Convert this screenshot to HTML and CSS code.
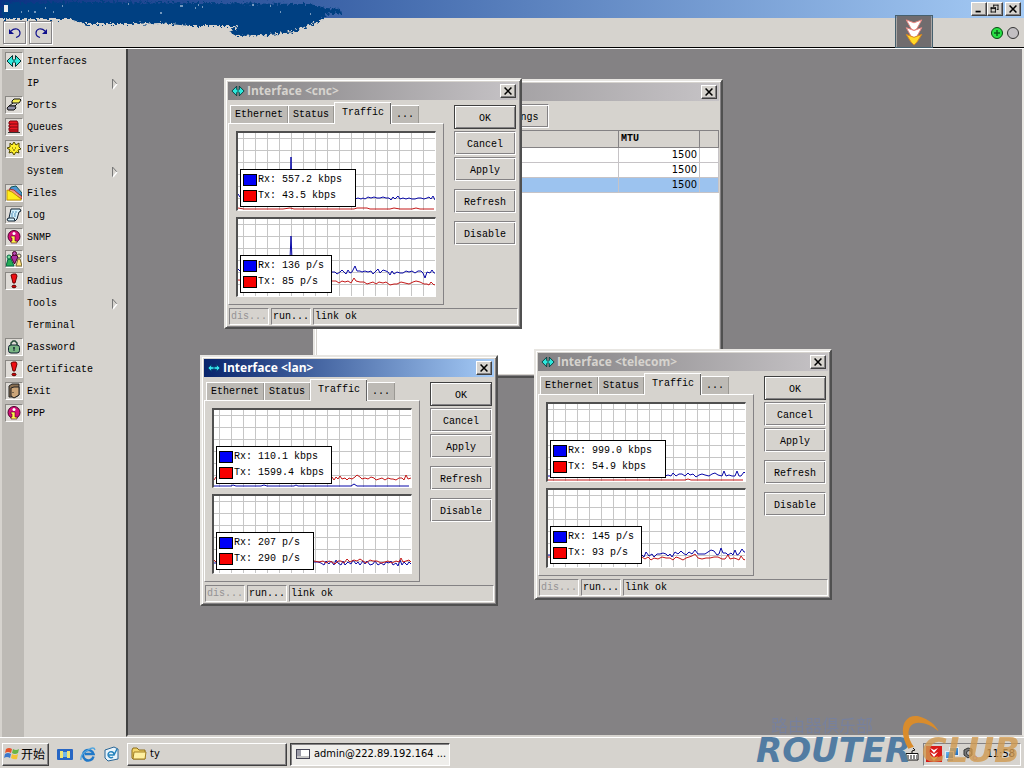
FILE: index.html
```html
<!DOCTYPE html>
<html lang="en">
<head>
<meta charset="utf-8">
<title>admin@222.89.192.164</title>
<link rel="stylesheet" href="styles.css">
</head>
<body>
<svg class="defs" aria-hidden="true">
  <defs>
    <pattern id="grid" width="12" height="12" patternUnits="userSpaceOnUse" x="5" y="5">
      <path d="M0.5 0V12M0 0.5H12" stroke="#c6c6c6" fill="none"/>
    </pattern>
    <linearGradient id="shell" x1="0" x2="1" y1="0" y2="1"><stop offset="0" stop-color="#6fc3f5"/><stop offset="1" stop-color="#1560b8"/></linearGradient>
    <filter id="rough" x="-5%" y="-20%" width="110%" height="140%">
      <feTurbulence type="fractalNoise" baseFrequency="0.4" numOctaves="2" seed="4"/>
      <feDisplacementMap in="SourceGraphic" scale="8"/>
    </filter>
    <symbol id="i-iface" viewBox="0 0 16 16"><path d="M1 8L6.500 2.500V13.500Z" fill="#2ee8dc" stroke="#033"/><path d="M15 8L9.500 2.500V13.500Z" fill="#2ee8dc" stroke="#033"/><path d="M5 8H11" stroke="#2ee8dc" stroke-width="3"/><path d="M8 6V10" stroke="#033"/></symbol>
    <symbol id="i-iface2" viewBox="0 0 16 16"><path d="M1 8L5 4V6.500H11V4L15 8L11 12V9.500H5V12Z" fill="#35e5ee" stroke="#06386b"/><path d="M8 6V10" stroke="#06386b"/></symbol>
    <symbol id="i-ports" viewBox="0 0 16 16"><path d="M6 4L8 2H14L15 3L13 6H6Z" fill="#f5ee54" stroke="#111"/><path d="M7 6L3 9H9L11 7" fill="none" stroke="#111"/><path d="M1 11L3 9H9L10 11L8 13H2Z" fill="#9292a8" stroke="#111"/></symbol>
    <symbol id="i-queues" viewBox="0 0 16 16"><path d="M4 2H11L12 4V13H4L3 11V9H4V8H3V6H4V5H3V3Z" fill="#ec1822" stroke="#7b0710"/><path d="M4 5H12M4 8H12M4 11H12" stroke="#7b0710"/><path d="M2 13.500H14" stroke="#333"/></symbol>
    <symbol id="i-drivers" viewBox="0 0 16 16"><path d="M4 2L6 4L8 1L10 4L13 2V6L15 8L12 9L13 12L10 11L8 14L6 11L3 12L4 9L1 7L4 6Z" fill="#fff02a" stroke="#534b00"/><path d="M6 7H7M9 7H10M7 9H9" stroke="#534b00"/></symbol>
    <symbol id="i-files" viewBox="0 0 16 16"><path d="M5 2L10 1L16 8V11L4 4Z" fill="#4d95d3" stroke="#155"/><path d="M3 4L8 5L16 12V14L4 7Z" fill="#ef9a85" stroke="#a33"/><path d="M1 5L6 7L15 14V15H1Z" fill="#ffee1c" stroke="#c69900"/></symbol>
    <symbol id="i-log" viewBox="0 0 16 16"><path d="M5 2H14L15 4L13 5L11 12L9 14H2L1 12L3 11Z" fill="#d5f1fb" stroke="#123"/><path d="M6 5H11M5 7H10M5 9H10" stroke="#5590b8" stroke-dasharray="2 1"/><path d="M3 11H8L9 14" fill="none" stroke="#123"/></symbol>
    <symbol id="i-info" viewBox="0 0 16 16"><circle cx="8" cy="7.500" r="6" fill="#d60e78" stroke="#4a0028"/><path d="M6 7H9V12H11V14H5V12H6V9H5V7Z" fill="#fff34a" stroke="#4a0028" stroke-width=".6"/><circle cx="8" cy="4.500" r="1.500" fill="#fff"/></symbol>
    <symbol id="i-users" viewBox="0 0 16 16"><path d="M0 15L2 8H5L8 15Z" fill="#25ad55" stroke="#064"/><circle cx="3" cy="6" r="2" fill="#7de0a0" stroke="#064"/><path d="M10 15L12 8H14L16 15Z" fill="#ffe27c" stroke="#763"/><circle cx="13" cy="5" r="2" fill="#ffe9a0" stroke="#555"/><path d="M5 6L7 4H10L12 6L8.500 13Z" fill="#a930a4" stroke="#402"/><circle cx="8.500" cy="2.500" r="2" fill="#b64ab1" stroke="#402"/></symbol>
    <symbol id="i-bang" viewBox="0 0 16 16"><path d="M5 2L7 1H10L11 3L9 10H7Z" fill="#ee0d12" stroke="#6d0000"/><ellipse cx="8" cy="13.500" rx="2" ry="1.300" fill="#d00" stroke="#500"/></symbol>
    <symbol id="i-lock" viewBox="0 0 16 16"><path d="M5 7V4L7 2H9L11 4V7" fill="none" stroke="#234a38" stroke-width="1.500"/><rect x="2.500" y="6" width="11" height="8" rx="2.500" fill="#79b583" stroke="#123"/><path d="M8 8V12M7 9H9" stroke="#123"/></symbol>
    <symbol id="i-exit" viewBox="0 0 16 16"><path d="M3 3L6 1H13V12L10 14H3Z" fill="#8b7052" stroke="#222"/><path d="M5 5L8 4H13V12L8 15L5 13Z" fill="#cba579" stroke="#222"/><path d="M7 9V10" stroke="#222"/></symbol>
    <symbol id="i-x" viewBox="0 0 16 14"><path d="M4 3L12 11M12 3L4 11" stroke="#000" stroke-width="1.800"/></symbol>
    <symbol id="i-arrow" viewBox="0 0 8 12"><path d="M1.500 11V1L6 6" stroke="#777" fill="none"/><path d="M6 6L2 11" fill="none" stroke="#fff" stroke-width="1.500"/></symbol>
    <symbol id="i-chev" viewBox="0 0 36 32"><rect width="36" height="32" fill="#706c6e"/><path d="M10 4L18 7L26 4L21 13L18 15L15 13Z" fill="#fff" stroke="#e98681"/><path d="M10 12L18 15L26 12L21 21L18 23L15 21Z" fill="#fff" stroke="#e98681"/><path d="M10 19L18 22L26 19L21 27L18 30L15 27Z" fill="#ffda28" stroke="#d98520"/></symbol>
  </defs>
</svg>

<header class="titlebar">
  <div class="caption-buttons">
    <button class="cap" type="button" aria-label="Minimize"><svg viewBox="0 0 16 14"><path d="M4 10H10" stroke="#000" stroke-width="2"/></svg></button>
    <button class="cap" type="button" aria-label="Restore"><svg viewBox="0 0 16 14"><path d="M6 2.500H12M6.500 2V5M11.500 2V8M10 7.500H12M3 5.500H9M3 6.500H9M3.500 5V11M8.500 5V11M3 10.500H9" stroke="#000" fill="none"/></svg></button>
    <button class="cap close" type="button" aria-label="Close"><svg><use href="#i-x"/></svg></button>
  </div>
  <svg class="smear" viewBox="0 0 350 42" aria-hidden="true">
    <path d="M2 3L90 2L200 3L310 4L326 8L340 9L341 13L326 15L318 22L304 27L294 32L270 35L236 36L228 31L240 26L220 26L190 26L160 23L130 24L85 24L70 19L2 19Z" fill="#054182" filter="url(#rough)"/>
    <path d="M21 12H22M28 11H29M34 12H36M45 8H46M53 12H54M62 6H63M128 4H129M160 13H162M180 6H183M195 8H196M198 5H199M202 7H203M252 5H254M270 6H271M280 12H281M310 14H311" stroke="#e8f0f8"/>
    <path d="M4 5H8V12H4Z" fill="#eee"/>
  </svg>
</header>

<div class="toolbar">
  <button class="tool" type="button" aria-label="Undo"><svg viewBox="0 0 16 16"><path d="M4 6C8 2 13 4 13 8C13 11 11 12 9 12.500" fill="none" stroke="#10108c" stroke-width="1.200"/><path d="M2 4V9H7Z" fill="#10108c"/></svg></button>
  <button class="tool" type="button" aria-label="Redo"><svg viewBox="0 0 16 16"><path d="M12 6C8 2 3 4 3 8C3 11 5 12 7 12.500" fill="none" stroke="#10108c" stroke-width="1.200"/><path d="M14 4V9H9Z" fill="#10108c"/></svg></button>
  <svg class="lights" viewBox="0 0 30 14" aria-hidden="true"><circle cx="7" cy="7" r="5.500" fill="#27e044" stroke="#064a10"/><path d="M4 7H10M7 4V10" stroke="#075c18" stroke-width="1.500"/><circle cx="23" cy="7" r="5.500" fill="#c2bfc2" stroke="#333"/></svg>
  <svg class="floater" aria-hidden="true"><use href="#i-chev"/></svg>
</div>

<div class="main">
  <nav class="menu">
    <button type="button"><span class="ico box"><svg><use href="#i-iface"/></svg></span>Interfaces</button>
    <button type="button"><span class="ico"></span>IP<svg class="arrow"><use href="#i-arrow"/></svg></button>
    <button type="button"><span class="ico box"><svg><use href="#i-ports"/></svg></span>Ports</button>
    <button type="button"><span class="ico box"><svg><use href="#i-queues"/></svg></span>Queues</button>
    <button type="button"><span class="ico box"><svg><use href="#i-drivers"/></svg></span>Drivers</button>
    <button type="button"><span class="ico"></span>System<svg class="arrow"><use href="#i-arrow"/></svg></button>
    <button type="button"><span class="ico box"><svg><use href="#i-files"/></svg></span>Files</button>
    <button type="button"><span class="ico box"><svg><use href="#i-log"/></svg></span>Log</button>
    <button type="button"><span class="ico box"><svg><use href="#i-info"/></svg></span>SNMP</button>
    <button type="button"><span class="ico box"><svg><use href="#i-users"/></svg></span>Users</button>
    <button type="button"><span class="ico box"><svg><use href="#i-bang"/></svg></span>Radius</button>
    <button type="button"><span class="ico"></span>Tools<svg class="arrow"><use href="#i-arrow"/></svg></button>
    <button type="button"><span class="ico"></span>Terminal</button>
    <button type="button"><span class="ico box"><svg><use href="#i-lock"/></svg></span>Password</button>
    <button type="button"><span class="ico box"><svg><use href="#i-bang"/></svg></span>Certificate</button>
    <button type="button"><span class="ico box"><svg><use href="#i-exit"/></svg></span>Exit</button>
    <button type="button"><span class="ico box"><svg><use href="#i-info"/></svg></span>PPP</button>
  </nav>

  <main class="desk">
    <section class="win list" aria-label="Interface list">
      <div class="bar"><button class="cap" type="button" aria-label="Close"><svg><use href="#i-x"/></svg></button></div>
      <div class="list-tools"><button class="btn settings" type="button">Settings</button></div>
      <div class="table-wrap">
        <table>
          <thead><tr><th class="wide"></th><th class="mtu">MTU</th><th></th></tr></thead>
          <tbody>
            <tr><td></td><td>1500</td><td></td></tr>
            <tr><td></td><td>1500</td><td></td></tr>
            <tr class="sel"><td></td><td>1500</td><td></td></tr>
          </tbody>
        </table>
      </div>
    </section>

    <section class="win cnc">
      <div class="bar"><svg class="wico"><use href="#i-iface"/></svg><h2>Interface &lt;cnc&gt;</h2><button class="cap" type="button" aria-label="Close"><svg><use href="#i-x"/></svg></button></div>
      <div class="content">
        <div class="tabs-area">
          <div class="tabs"><button type="button">Ethernet</button><button type="button">Status</button><button type="button" class="on">Traffic</button><button type="button">...</button></div>
          <div class="panel">
            <div class="chart">
              <svg viewBox="0 0 197 77"><rect width="197" height="77" fill="url(#grid)"/>
                <path class="rx" d="M0 61L2 64L50 65L52 60L53 24L54 60L56 66L117 66l3 -1l3 1l2 -1l2 1l3 -2l3 1l3 -1l3 1l3 0l3 -1l3 1l3 0l2 2l2 -3l2 2l3 -3l2 3l3 -1l3 1l3 -1l3 1l3 0l3 -1l3 0l3 1l3 -1l2 -1l2 2l2 -3l2 4l2 -2l3 2l2 -1l2 1"/>
                <path class="tx" d="M0 75L6 76L45 76L52 75L56 76L116 76l3 -1l10 0l3 1l20 0l4 -1l6 1l12 0l4 -1l4 1l14 0"/></svg>
              <dl class="legend"><div><dt class="b"></dt><dd>Rx: 557.2 kbps</dd></div><div><dt class="r"></dt><dd>Tx: 43.5 kbps</dd></div></dl>
            </div>
            <div class="chart">
              <svg viewBox="0 0 197 77"><rect width="197" height="77" fill="url(#grid)"/>
                <path class="rx" d="M0 50L3 53L50 54L52 40L53 17L54 40L56 54L94 53l3 0l2 2l3 -2l2 -2l2 2l2 2l2 -4l2 3l2 -1l3 -6l2 5l3 0l2 1l3 -1l3 1l3 -1l2 3l3 -3l2 -2l2 4l3 -3l3 1l2 1l2 3l2 -4l2 3l3 -2l3 1l3 0l3 -2l3 1l3 -1l3 2l3 -2l3 0l2 2l2 5l2 -6l3 1l2 -3l2 3l2 0"/>
                <path class="tx" d="M0 61L20 62L94 62l4 0l3 2l3 -2l3 1l3 -1l3 2l3 -5l2 3l4 1l4 0l3 2l3 -1l3 -1l3 2l3 -2l4 1l3 -1l4 3l4 -1l3 0l4 -2l4 1l4 1l4 -2l3 -1l4 1l4 2l3 0l2 1l2 -3l3 3l2 -1"/></svg>
              <dl class="legend short"><div><dt class="b"></dt><dd>Rx: 136 p/s</dd></div><div><dt class="r"></dt><dd>Tx: 85 p/s</dd></div></dl>
            </div>
          </div>
        </div>
        <div class="actions"><button class="btn default" type="button">OK</button><button class="btn" type="button">Cancel</button><button class="btn" type="button">Apply</button><button class="btn far" type="button">Refresh</button><button class="btn far" type="button">Disable</button></div>
      </div>
      <div class="status"><span class="off">dis...</span><span>run...</span><span class="grow">link ok</span></div>
    </section>

    <section class="win telecom">
      <div class="bar"><svg class="wico"><use href="#i-iface"/></svg><h2>Interface &lt;telecom&gt;</h2><button class="cap" type="button" aria-label="Close"><svg><use href="#i-x"/></svg></button></div>
      <div class="content">
        <div class="tabs-area">
          <div class="tabs"><button type="button">Ethernet</button><button type="button">Status</button><button type="button" class="on">Traffic</button><button type="button">...</button></div>
          <div class="panel">
            <div class="chart">
              <svg viewBox="0 0 197 77"><rect width="197" height="77" fill="url(#grid)"/>
                <path class="rx" d="M0 72L117 72l3 -1l3 1l2 -3l3 3l3 -2l3 0l3 2l3 -3l2 2l3 -1l3 3l3 -2l3 -1l3 1l4 1l3 -2l3 -1l3 2l4 1l2 -5l2 5l3 -1l3 1l3 0l2 -5l2 5l2 0l3 -4l2 2l2 -1"/>
                <path class="tx" d="M0 76L137 76l3 -1l3 1L195 76"/></svg>
              <dl class="legend"><div><dt class="b"></dt><dd>Rx: 999.0 kbps</dd></div><div><dt class="r"></dt><dd>Tx: 54.9 kbps</dd></div></dl>
            </div>
            <div class="chart">
              <svg viewBox="0 0 197 77"><rect width="197" height="77" fill="url(#grid)"/>
                <path class="rx" d="M0 65L94 65l2 2l2 -5l3 4l3 -2l2 3l3 -3l3 0l3 -1l3 1l2 2l2 -2l2 3l3 -5l3 2l3 -3l2 2l3 2l3 -3l3 2l3 -4l3 4l3 0l4 0l3 -2l3 -2l3 1l3 4l2 -1l2 -6l2 5l3 0l2 2l3 -2l2 2l2 -5l2 5l2 -1l3 -5l2 3l2 0"/>
                <path class="tx" d="M0 67L94 67l3 2l3 -2l3 3l3 -2l4 1l4 -2l4 1l4 0l3 2l3 -3l3 1l4 2l3 -2l3 -1l3 -1l3 -2l3 4l4 1l4 -1l4 0l4 -1l4 0l4 2l3 0l3 -4l2 4l4 -1l3 1l2 1l2 -4l3 4l3 -2l2 1"/></svg>
              <dl class="legend short"><div><dt class="b"></dt><dd>Rx: 145 p/s</dd></div><div><dt class="r"></dt><dd>Tx: 93 p/s</dd></div></dl>
            </div>
          </div>
        </div>
        <div class="actions"><button class="btn default" type="button">OK</button><button class="btn" type="button">Cancel</button><button class="btn" type="button">Apply</button><button class="btn far" type="button">Refresh</button><button class="btn far" type="button">Disable</button></div>
      </div>
      <div class="status"><span class="off">dis...</span><span>run...</span><span class="grow">link ok</span></div>
    </section>

    <section class="win lan active">
      <div class="bar"><svg class="wico"><use href="#i-iface2"/></svg><h2>Interface &lt;lan&gt;</h2><button class="cap" type="button" aria-label="Close"><svg><use href="#i-x"/></svg></button></div>
      <div class="content">
        <div class="tabs-area">
          <div class="tabs"><button type="button">Ethernet</button><button type="button">Status</button><button type="button" class="on">Traffic</button><button type="button">...</button></div>
          <div class="panel">
            <div class="chart">
              <svg viewBox="0 0 197 77"><rect width="197" height="77" fill="url(#grid)"/>
                <path class="tx" d="M0 70L2 67L118 67l2 3l2 -3l2 2l2 -3l2 3l3 -1l2 2l2 -2l3 1l3 -2l2 -2l3 2l2 2l3 -1l3 1l3 -2l3 1l2 2l3 -1l3 -1l3 2l3 -2l3 1l2 0l3 1l3 -2l3 0l2 2l2 -5l2 4l3 -1l2 -1l2 2l2 -1"/>
                <path class="rx" d="M0 76L17 76l2 -1l3 1L47 76l3 -1l3 1L80 76l2 -1l2 1L137 76l3 -2l3 2L195 76"/></svg>
              <dl class="legend"><div><dt class="b"></dt><dd>Rx: 110.1 kbps</dd></div><div><dt class="r"></dt><dd>Tx: 1599.4 kbps</dd></div></dl>
            </div>
            <div class="chart">
              <svg viewBox="0 0 197 77"><rect width="197" height="77" fill="url(#grid)"/>
                <path class="rx" d="M0 67L100 66l4 0l3 1l3 2l2 -4l3 3l2 -3l3 4l2 -5l2 3l3 2l2 -4l2 4l3 -3l3 2l2 -4l3 4l2 -2l2 3l3 -4l2 3l2 -3l3 4l3 -1l2 -3l3 4l3 -2l3 2l2 -3l3 1l2 -2l2 4l3 -2l2 3l2 -6l2 5l2 -3l3 3l2 -3l2 2"/>
                <path class="tx" d="M0 64L2 66L100 65l5 1l4 -1l3 2l3 -2l3 1l3 2l3 -3l3 0l3 2l3 -4l3 3l4 -2l3 1l3 -2l3 2l3 2l4 -3l3 1l4 0l4 2l4 -1l3 -1l4 2l4 -2l3 1l2 -4l2 4l3 -1l3 -1l2 2l2 0"/></svg>
              <dl class="legend mid"><div><dt class="b"></dt><dd>Rx: 207 p/s</dd></div><div><dt class="r"></dt><dd>Tx: 290 p/s</dd></div></dl>
            </div>
          </div>
        </div>
        <div class="actions"><button class="btn default" type="button">OK</button><button class="btn" type="button">Cancel</button><button class="btn" type="button">Apply</button><button class="btn far" type="button">Refresh</button><button class="btn far" type="button">Disable</button></div>
      </div>
      <div class="status"><span class="off">dis...</span><span>run...</span><span class="grow">link ok</span></div>
    </section>
  </main>
</div>

<footer class="taskbar">
  <button class="start" type="button"><svg viewBox="0 0 16 16"><path d="M2 3Q5 1 8 3L7 7Q4 5 1 7Z" fill="#e5532b"/><path d="M9 3Q12 5 15 3L14 7Q11 9 8 7Z" fill="#68b545"/><path d="M1 8Q4 6 7 8L6 12Q3 10 0 12Z" fill="#3b78cc"/><path d="M8 8Q11 10 14 8L13 13Q10 14 7 12Z" fill="#f3c334"/></svg>开始</button>
  <div class="quick">
    <svg viewBox="0 0 16 16"><rect x="0" y="3" width="16" height="11" rx="1" fill="#2766c4"/><path d="M3 5H6V12H3ZM10 5H13V12H10Z" fill="#eee477"/><path d="M6 6H10V11H6Z" fill="#70b6e8"/></svg>
    <svg viewBox="0 0 16 16"><path d="M13.500 10.500A5.300 5.300 0 1 1 13.500 8H5" fill="none" stroke="#2078c8" stroke-width="2.500"/><path d="M1 14Q0 8 8 4Q14 0 15 4" fill="none" stroke="#55a7df" stroke-width="1.300"/></svg>
    <svg viewBox="0 0 16 16"><path d="M2 4L11 1L15 3V13L5 15L2 12Z" fill="#e9f4fb" stroke="#286596"/><path d="M11 8A3 3 0 1 0 10 11M6 9H11L14 3" fill="none" stroke="#2382bd" stroke-width="1.500"/></svg>
  </div>
  <button class="task" type="button"><svg viewBox="0 0 16 16"><path d="M1 4L2 2H6L8 4H14V13H2L1 12Z" fill="#f4d66c" stroke="#8c6c17"/><path d="M3 6H15L14 13H2Z" fill="#fff0a0" stroke="#a17e23"/></svg>ty</button>
  <button class="task pressed" type="button"><svg viewBox="0 0 16 16"><rect x="1.500" y="3.500" width="13" height="9" fill="#fff" stroke="#445"/><path d="M2 4H6V10H2Z" fill="#9c9ca8"/><path d="M2 11H14" stroke="#888"/></svg>admin@222.89.192.164 ...</button>
  <div class="tray-area">
    <svg class="kbd" viewBox="0 0 14 16"><path d="M1 7.500H13V14H1Z" fill="#fff" stroke="#111"/><path d="M2 10H12M2 12H12" stroke="#111" stroke-dasharray="2 1"/><path d="M7 7V5L10 4L8 2" fill="none" stroke="#111"/></svg>
    <div class="tray">
      <svg viewBox="0 0 16 16"><rect width="16" height="16" fill="#d91a18"/><path d="M4 2L8 4L12 2L8 7ZM4 6L8 8L12 6L8 11Z" fill="#fff"/><path d="M4 10L8 12L12 10L8 15Z" fill="#ffdc35"/></svg>
      <svg viewBox="0 0 16 16"><rect x="5.500" y="1.500" width="9" height="8" fill="url(#shell)" stroke="#e2edf5"/><rect x="1.500" y="5.500" width="8" height="7" fill="url(#shell)" stroke="#e2edf5"/><path d="M3 14H9" stroke="#3871a7"/></svg>
      <svg viewBox="0 0 16 16"><path d="M2 4L6 2L10 3V9L6 12L2 9Z" fill="#777" stroke="#333"/><circle cx="7" cy="7" r="2.500" fill="#bbb" stroke="#333"/><circle cx="13" cy="12" r="2" fill="none" stroke="#b28ac0"/></svg>
      <time>11:58</time>
    </div>
  </div>
</footer>

<div class="mark">
  <svg viewBox="0 0 60 60" aria-hidden="true"><path d="M8 40C-4 20 3 1 20 5C31 8 38 15 41 21C31 12 15 8 10 16C6 23 9 31 14 38Z" fill="#d98c2c"/></svg>
  <p class="cn" lang="zh">路由器俱乐部</p>
  <p class="name"><span class="router">ROUTER</span><span class="club">CLUB</span></p>
</div>
</body>
</html>
```

FILE: styles.css
```css
* { box-sizing: border-box; }
body {
  margin: 0;
  height: 100vh;
  display: grid;
  grid-template-rows: 18px 30px 1fr 31px;
  background: #d6d3ce;
  color: #000;
  font: 10px/16px "Liberation Mono", "Noto Sans CJK SC", monospace;
  overflow: hidden;
  position: relative;
}
button { font: inherit; color: inherit; margin: 0; padding: 0; border: 0; background: none; }
h2, p, dl, dd { margin: 0; }
svg { display: block; flex: none; }
.defs { position: absolute; width: 0; height: 0; }

.titlebar {
  position: relative;
  z-index: 2;
  display: flex;
  justify-content: flex-end;
  padding: 2px 3px 0 0;
  background: linear-gradient(90deg, #0a3283, #a5cbf5);
}
.caption-buttons { display: flex; }
.cap {
  width: 16px;
  height: 14px;
  background: #d6d3ce;
  border: 1px solid;
  border-color: #fff #404040 #404040 #fff;
  box-shadow: inset -1px -1px #848284;
}
.cap svg { width: 14px; height: 12px; }
.cap.close { margin-left: 2px; }
.smear { position: absolute; left: 0; top: 0; width: 350px; height: 42px; }

.toolbar {
  position: relative;
  display: flex;
  align-items: center;
  gap: 3px;
  padding: 0 4px 0 3px;
  border-bottom: 1px solid #000;
}
.tool {
  width: 23px;
  height: 23px;
  display: grid;
  place-items: center;
  border: 1px solid #848284;
  box-shadow: inset 1px 1px #fff, 1px 1px #fff;
}
.tool svg { width: 16px; height: 16px; }
.lights { width: 30px; height: 14px; margin-left: auto; }
.floater { position: absolute; z-index: 3; right: 91px; top: -3px; width: 38px; height: 33px; border: 1px solid #46606e; }

.main { display: grid; grid-template-columns: 126px 1fr; border-top: 1px solid #fff; min-height: 0; }
.menu {
  display: flex;
  flex-direction: column;
  padding: 1px 0 0 2px;
  background: linear-gradient(90deg, #d6d3ce 2px, #bdbab5 2px, #bdbab5 24px, #d6d3ce 24px);
}
.menu button { display: flex; align-items: center; height: 22px; padding: 2px 0 0 1px; text-align: left; }
.ico { width: 18px; height: 18px; margin: -2px 4px 0 2px; flex: none; }
.ico.box { background: #dedbd6; border: 1px solid; border-color: #8a8884 #fff #fff #8a8884; }
.ico svg { width: 16px; height: 16px; }
.arrow { width: 8px; height: 12px; margin: 0 7px 0 auto; }
.desk {
  position: relative;
  background: #848284;
  border: solid;
  border-width: 0 2px 2px;
  border-color: #d6d3ce #e8e6e2 #d6d3ce #404040;
}

.win {
  position: absolute;
  width: 298px;
  display: flex;
  flex-direction: column;
  padding: 2px;
  background: #d6d3ce;
  border: 2px solid;
  border-color: #e8e6e2 #505050 #505050 #e8e6e2;
  box-shadow: inset 1px 1px #fff, inset -1px -1px #848284;
}
/* window places on the desktop */
.list { left: 185px; top: 30px; width: 410px; height: 299px; }
.cnc { left: 96px; top: 29px; }
.telecom { left: 406px; top: 300px; }
.lan { left: 72px; top: 306px; }

.bar {
  height: 18px;
  display: flex;
  align-items: center;
  gap: 2px;
  padding: 0 2px 0 3px;
  background: linear-gradient(90deg, #848284, #c6c3c6);
  color: #d6d3ce;
}
.active .bar { background: linear-gradient(90deg, #08246b, #a5cbf7); color: #fff; }
.bar h2 { font: bold 12px/16px "Open Sans", sans-serif; }
.bar .cap { margin-left: auto; }
.wico { width: 14px; height: 14px; }

.content { display: flex; align-items: flex-start; gap: 10px; padding: 1px 2px 0 0; }
.tabs { display: flex; align-items: flex-end; padding: 0 0 0 2px; height: 22px; }
.tabs button {
  height: 18px;
  padding: 1px 5px 0 4px;
  background: #bdbab5;
  border: solid #fff;
  border-width: 1px 0 0 1px;
  box-shadow: inset -1px 0 #9a9893;
}
.tabs .on {
  height: 22px;
  padding: 0 7px 2px;
  margin-bottom: -1px;
  z-index: 1;
  background: #d6d3ce;
  box-shadow: inset -1px 0 #636363;
}
.panel {
  width: 216px;
  display: flex;
  flex-direction: column;
  gap: 6px;
  padding: 7px;
  border: 1px solid;
  border-color: #fff #848284 #848284 #fff;
}
.chart {
  position: relative;
  width: 200px;
  height: 80px;
  background: #fff;
  border: solid;
  border-width: 2px 1px 1px 2px;
  border-color: #505050 #fff #fff #505050;
}
.chart svg { width: 197px; height: 77px; }
.rx, .tx { fill: none; stroke-width: 1px; }
.rx { stroke: #0808a8; }
.tx { stroke: #c41818; }
.legend {
  position: absolute;
  left: 2px;
  bottom: 3px;
  width: 116px;
  padding: 2px;
  background: #fff;
  border: 1px solid #000;
}
.legend.short { width: 92px; }
.legend.mid { width: 98px; }
.legend div { display: flex; align-items: center; height: 16px; gap: 1px; }
.legend dt { width: 14px; height: 12px; border: 1px solid #000; }
.legend .b { background: #0000f7; }
.legend .r { background: #f70000; }
.legend dd { white-space: nowrap; }

.actions { display: flex; flex-direction: column; gap: 2px; padding-top: 4px; width: 62px; }
.btn {
  height: 24px;
  padding-top: 3px;
  border: 1px solid;
  border-color: #848284 #fff #fff #848284;
  box-shadow: inset 1px 1px #fff, inset -1px -1px #848284;
  background: #d6d3ce;
}
.btn.default { border-color: #404040; }
.btn.far { margin-top: 6px; }
.status { display: flex; gap: 2px; padding: 3px 0 0 1px; }
.status span {
  width: 40px;
  height: 17px;
  padding-left: 1px;
  border: 1px solid;
  border-color: #848284 #fff #fff #848284;
}
.status .grow { flex: 1; }
.status .off { color: #949294; }

.list-tools { padding: 3px 0 2px 163px; }
.settings { width: 69px; }
.table-wrap { flex: 1; background: #fff; border-top: 1px solid #848284; }
table { width: 100%; border-collapse: collapse; table-layout: fixed; }
th, td { height: 15px; padding: 0 2px; line-height: 14px; border: solid #c6c3c6; border-width: 0 1px 1px 0; text-align: right; }
td { font: 11px/14px "DejaVu Sans Condensed", "DejaVu Sans", sans-serif; }
th { height: 16px; background: #d6d3ce; border-color: #848284; text-align: left; }
th.mtu { width: 81px; }
th:last-child { width: 19px; }
.sel td { background: #9cc3ef; }

.taskbar {
  display: flex;
  align-items: center;
  padding: 4px 3px 2px 2px;
  border-top: 1px solid #fff;
  font: 11px/16px "DejaVu Sans Condensed", "DejaVu Sans", "Noto Sans CJK SC", sans-serif;
}
.taskbar svg { width: 16px; height: 16px; }
.start, .task {
  height: 23px;
  display: flex;
  align-items: center;
  gap: 3px;
  padding: 0 3px;
  border: 1px solid;
  border-color: #fff #404040 #404040 #fff;
  box-shadow: inset -1px -1px #848284;
  white-space: nowrap;
}
.start { width: 47px; gap: 1px; padding: 0 1px; font: 12px/16px "Noto Sans CJK SC", sans-serif; }
.quick { display: flex; gap: 7px; padding: 0 8px; }
.task { width: 160px; }
.pressed {
  margin-left: 3px;
  padding-left: 4px;
  background: #efeeeb;
  border-color: #404040 #fff #fff #404040;
  box-shadow: inset 1px 1px #848284;
}
.tray-area { margin-left: auto; display: flex; align-items: center; gap: 4px; }
.taskbar .kbd { width: 14px; }
.tray {
  display: flex;
  align-items: center;
  gap: 2px;
  height: 23px;
  padding: 0 5px 0 2px;
  border: 1px solid;
  border-color: #848284 #fff #fff #848284;
}
.tray time { margin-left: 6px; }

.mark { position: absolute; z-index: 5; right: 4px; bottom: 0; width: 264px; height: 56px; pointer-events: none; }
.mark svg { position: absolute; left: 145px; top: 0; width: 55px; height: 55px; }
.cn { padding: 4px 0 0 15px; color: #7080ac; font: 17px/18px "Noto Sans CJK SC", sans-serif; opacity: .6; }
.name { display: flex; justify-content: space-between; font: italic bold 34px/32px "DejaVu Sans", sans-serif; }
.router { color: #527ca2; }
.club { color: #d19a50; opacity: .8; }
```
